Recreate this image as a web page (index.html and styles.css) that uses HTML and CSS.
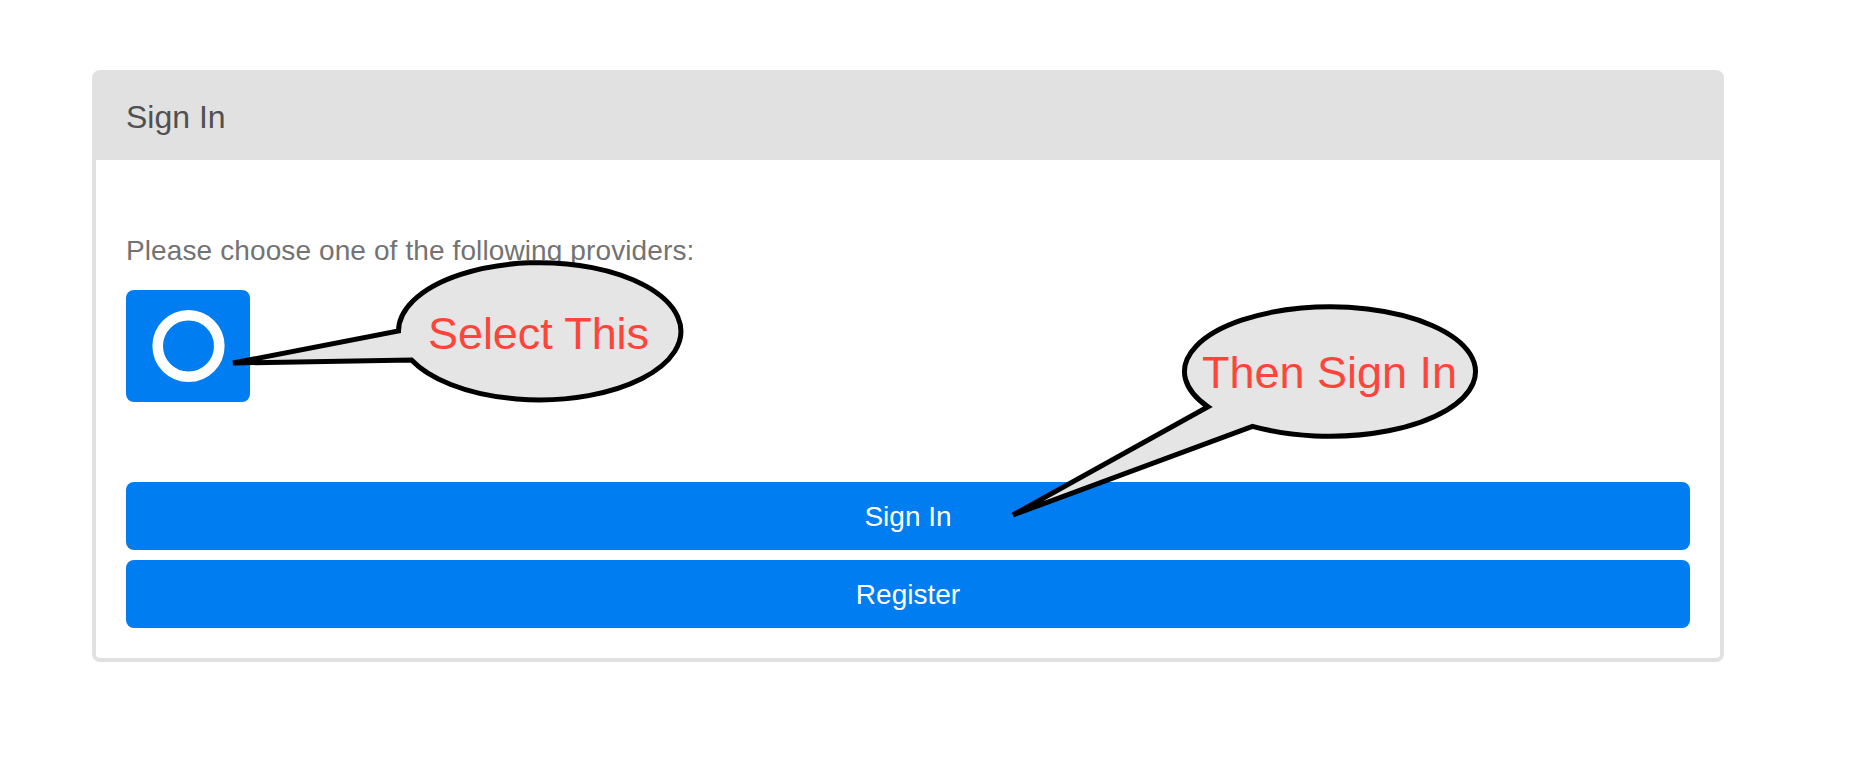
FILE: index.html
```html
<!DOCTYPE html>
<html lang="en">
<head>
<meta charset="utf-8">
<title>Sign In</title>
<link rel="stylesheet" href="styles.css">
</head>
<body>
<main class="card">
  <header class="card-header">Sign In</header>
  <div class="card-body">
    <p class="prompt">Please choose one of the following providers:</p>
    <button class="provider" aria-label="Provider">
      <svg width="74" height="74" viewBox="0 0 74 74"><circle cx="36.5" cy="37" r="30.8" fill="none" stroke="#fff" stroke-width="10.6"/></svg>
    </button>
    <div class="actions">
      <button class="btn">Sign In</button>
      <button class="btn">Register</button>
    </div>
  </div>
</main>
<svg class="callouts" width="1874" height="760" viewBox="0 0 1874 760">
  <path class="bubble" d="M398.5 331 A141.2 68.6 0 1 1 411.5 360 L233 363 Z"/>
  <text class="note" x="428" y="349" textLength="221">Select This</text>
  <path class="bubble" d="M1208 406.8 A145.5 64.7 0 1 1 1252.5 426.3 L1013 515 Z"/>
  <text class="note" x="1202" y="388" textLength="255">Then Sign In</text>
</svg>
</body>
</html>
```
FILE: styles.css
```css
* { box-sizing: border-box; }
body {
  margin: 0;
  padding: 70px 150px 0 92px;
  height: 760px;
  overflow: hidden;
  background: #fff;
  font-family: "Liberation Sans", Arial, sans-serif;
}
.card {
  height: 592px;
  border: 4px solid #e1e1e1;
  border-radius: 8px;
  background: #fff;
}
.card-header {
  height: 86px;
  padding: 0 30px;
  background: #e1e1e1;
  color: #505050;
  font-size: 32px;
  line-height: 87px;
}
.card-body {
  display: flex;
  flex-direction: column;
  align-items: flex-start;
  padding: 71px 30px 0;
}
.prompt {
  margin: 0;
  color: #737373;
  font-size: 28px;
  letter-spacing: 0.11px;
  line-height: 40px;
  white-space: nowrap;
}
.provider {
  display: flex;
  align-items: center;
  justify-content: center;
  width: 124px;
  height: 112px;
  margin-top: 19px;
  padding: 0 0 0 1px;
  border: 0;
  border-radius: 8px;
  background: #007df0;
}
.actions {
  display: flex;
  flex-direction: column;
  gap: 10px;
  width: 100%;
  margin-top: 80px;
}
.btn {
  height: 68px;
  padding: 1px 0 0;
  border: 0;
  border-radius: 8px;
  background: #007df0;
  color: #fff;
  font: 28px/67px "Liberation Sans", Arial, sans-serif;
}
.callouts {
  position: absolute;
  top: 0;
  left: 0;
  pointer-events: none;
}
.bubble {
  fill: #e5e5e5;
  stroke: #000;
  stroke-width: 5;
}
.note {
  fill: #ff453a;
  font-size: 45px;
}
```
